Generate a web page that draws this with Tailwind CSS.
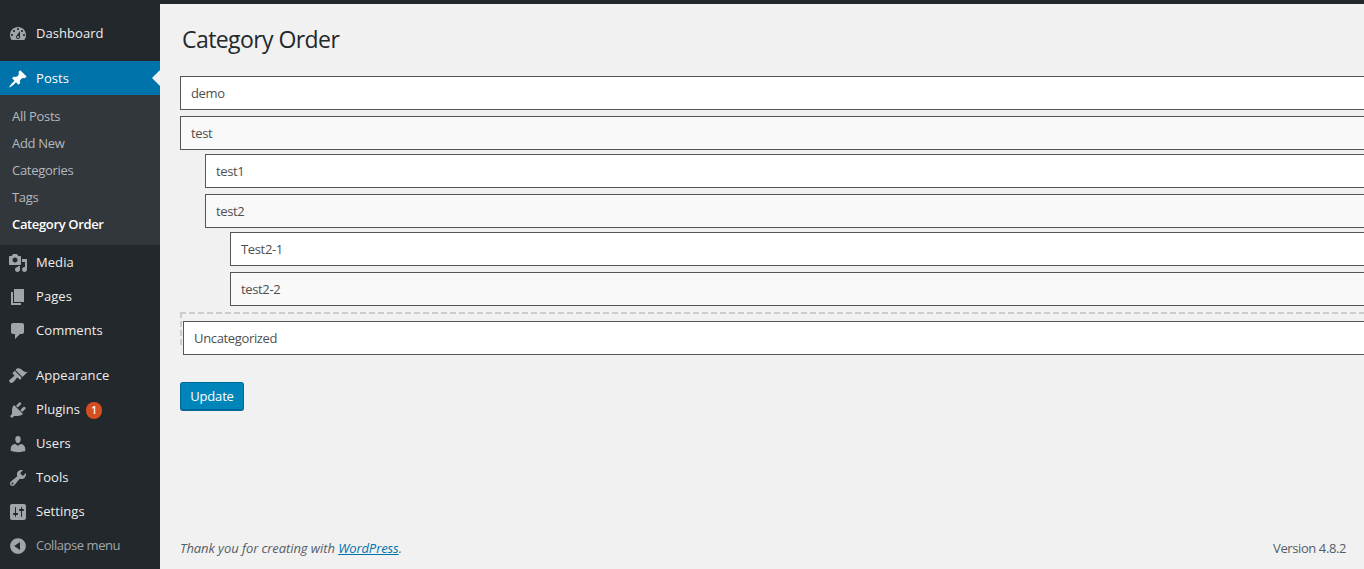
<!DOCTYPE html>
<html lang="en">
<head>
    <meta charset="utf-8">
    <title>Category Order</title>
    <script src="https://cdn.jsdelivr.net/npm/@tailwindcss/browser@4"></script>
</head>
<body class="h-[569px] overflow-hidden bg-[#f1f1f1] font-['Open_Sans','Noto_Sans',sans-serif] text-[13px] text-[#4f4f4f]">
    <div class="h-1 bg-[#23282d]"></div>
    <div class="flex h-[565px]">
        <!-- admin menu -->
        <nav class="w-40 shrink-0 bg-[#23282d] pt-3 text-[#eee] text-[13px] tracking-[0.06px]">
            <a class="flex h-[34px] items-center pl-[8px] pt-[2px]"><svg class="w-5 h-5 fill-[#a0a5aa] mr-2" viewBox="0 0 20 20"><path d="M3.76 16h12.48c1.1-1.37 1.76-3.11 1.76-5 0-4.42-3.58-8-8-8s-8 3.58-8 8c0 1.89.66 3.63 1.76 5zM10 4c.55 0 1 .45 1 1s-.45 1-1 1-1-.45-1-1 .45-1 1-1zM6 6c.55 0 1 .45 1 1s-.45 1-1 1-1-.45-1-1 .45-1 1-1zm8 0c.55 0 1 .45 1 1s-.45 1-1 1-1-.45-1-1 .45-1 1-1zm-5.37 5.55L12 7v6c0 1.1-.9 2-2 2s-2-.9-2-2c0-.57.24-1.08.63-1.45zM4 10c.55 0 1 .45 1 1s-.45 1-1 1-1-.45-1-1 .45-1 1-1zm12 0c.55 0 1 .45 1 1s-.45 1-1 1-1-.45-1-1 .45-1 1-1zm-5 3c0-.55-.45-1-1-1s-1 .45-1 1 .45 1 1 1 1-.45 1-1z"/></svg>Dashboard</a>
            <a class="relative mt-[11px] flex h-[34px] items-center bg-[#0073aa] pl-[8px] pt-[2px] text-white"><svg class="w-5 h-5 fill-white mr-2" viewBox="0 0 20 20"><path d="M10.44 3.02l1.82-1.82 6.36 6.35-1.83 1.82c-1.05-.68-2.48-.57-3.41.36l-.75.75c-.92.93-1.04 2.35-.35 3.41l-1.83 1.82-2.41-2.41-2.8 2.79c-.42.42-3.38 2.71-3.8 2.29s1.86-3.39 2.28-3.81l2.79-2.79L4.1 9.36l1.83-1.82c1.05.69 2.48.57 3.4-.36l.75-.75c.93-.92 1.05-2.35.36-3.41z"/></svg>Posts<span class="absolute right-0 top-[9px] h-0 w-0 border-y-[8px] border-r-[8px] border-y-transparent border-r-[#f1f1f1]"></span></a>
            <ul class="bg-[#32373c] py-[7px] pb-[8px] text-[#b4b9be] tracking-[-0.3px]">
                <li class="flex h-[27px] items-center pl-3 pt-[2px]">All Posts</li>
                <li class="flex h-[27px] items-center pl-3 pt-[2px]">Add New</li>
                <li class="flex h-[27px] items-center pl-3 pt-[2px]">Categories</li>
                <li class="flex h-[27px] items-center pl-3 pt-[2px]">Tags</li>
                <li class="flex h-[27px] items-center pl-3 pt-[2px] font-semibold text-white tracking-[-0.35px]">Category Order</li>
            </ul>
            <a class="flex h-[34px] items-center pl-[8px] pt-[2px]"><svg class="w-5 h-5 fill-[#a0a5aa] mr-2" viewBox="0 0 20 20"><path d="M13 11V4c0-.55-.45-1-1-1h-1.67L9 1H5L3.67 3H2c-.55 0-1 .45-1 1v7c0 .55.45 1 1 1h10c.55 0 1-.45 1-1zM7 4.5c1.38 0 2.5 1.12 2.5 2.5S8.38 9.5 7 9.5 4.5 8.38 4.5 7 5.62 4.5 7 4.5zM14 6h5v10.5c0 1.38-1.12 2.5-2.5 2.5S14 17.88 14 16.5s1.12-2.5 2.5-2.5c.17 0 .34.02.5.05V9h-3V6zm-4 8.05V13h2v3.5c0 1.38-1.12 2.5-2.5 2.5S7 17.88 7 16.5 8.12 14 9.5 14c.17 0 .34.02.5.05z"/></svg>Media</a>
            <a class="flex h-[34px] items-center pl-[8px] pt-[2px]"><svg class="w-5 h-5 fill-[#a0a5aa] mr-2" viewBox="0 0 20 20"><path d="M6 15V2h10v13H6zm-1 1h8v2H3V5h2v11z"/></svg>Pages</a>
            <a class="flex h-[34px] items-center pl-[8px] pt-[2px]"><svg class="w-5 h-5 fill-[#a0a5aa] mr-2" viewBox="0 0 20 20"><path d="M5 2h9c1.1 0 2 .9 2 2v7c0 1.1-.9 2-2 2h-2l-5 5v-5H5c-1.1 0-2-.9-2-2V4c0-1.1.9-2 2-2z"/></svg>Comments</a>
            <a class="mt-[11px] flex h-[34px] items-center pl-[8px] pt-[2px]"><svg class="w-5 h-5 fill-[#a0a5aa] mr-2" viewBox="0 0 20 20"><path d="M14.48 11.06L7.41 3.99l1.5-1.5c.5-.56 2.3-.47 3.51.32 1.21.8 1.43 1.28 2.91 2.1 1.18.64 2.45 1.26 4.45.85zm-.71.71L6.7 4.7 4.93 6.47c-.39.39-.39 1.02 0 1.41l1.06 1.06c.39.39.39 1.03 0 1.42-.6.6-1.43 1.11-2.21 1.69-.35.26-.7.53-1.01.84C1.43 13.23.4 14.91 1.8 16.31c1.4 1.4 3.08.37 4.43-.97.31-.31.58-.66.84-1.01.58-.78 1.09-1.61 1.69-2.21.39-.39 1.03-.39 1.42 0l1.06 1.06c.39.39 1.02.39 1.41 0z"/></svg>Appearance</a>
            <a class="flex h-[34px] items-center pl-[8px] pt-[2px]"><svg class="w-5 h-5 fill-[#a0a5aa] mr-2" viewBox="0 0 20 20"><path d="M13.11 4.36L9.87 7.6 8 5.73l3.24-3.24c.35-.34 1.05-.2 1.56.32.52.51.66 1.21.31 1.55zm-8 1.77l.91-1.12 9.01 9.01-1.19.84c-.71.71-2.63 1.16-3.82 1.16H6.14L4.9 17.26c-.59.59-1.54.59-2.12 0-.59-.58-.59-1.53 0-2.12l1.24-1.24v-3.88c0-1.13.4-3.19 1.09-3.89zm7.26 3.97l3.24-3.24c.34-.35 1.04-.21 1.55.31.52.51.66 1.21.31 1.55l-3.24 3.25z"/></svg>Plugins<span class="ml-[6px] flex h-[17px] w-[16px] items-center justify-center rounded-full bg-[#d54e21] text-[10px] font-semibold text-white">1</span></a>
            <a class="flex h-[34px] items-center pl-[8px] pt-[2px]"><svg class="w-5 h-5 fill-[#a0a5aa] mr-2" viewBox="0 0 20 20"><path d="M10 9.25c-2.27 0-2.73-3.44-2.73-3.44C7 4.02 7.82 2 9.97 2c2.16 0 2.98 2.02 2.71 3.81 0 0-.41 3.44-2.68 3.44zm0 2.57L12.72 10c2.39 0 4.52 2.33 4.52 4.53v2.49s-3.65 1.13-7.24 1.13c-3.65 0-7.24-1.13-7.24-1.13v-2.49c0-2.25 1.94-4.48 4.47-4.48z"/></svg>Users</a>
            <a class="flex h-[34px] items-center pl-[8px] pt-[2px]"><svg class="w-5 h-5 fill-[#a0a5aa] mr-2" viewBox="0 0 20 20"><path d="M16.68 9.77c-1.34 1.34-3.3 1.67-4.95.99l-5.41 6.52c-.99.99-2.59.99-3.58 0s-.99-2.59 0-3.57l6.52-5.42c-.68-1.65-.35-3.61.99-4.95 1.28-1.28 3.12-1.62 4.72-1.06l-2.89 2.89 2.82 2.82 2.86-2.87c.53 1.58.18 3.39-1.08 4.65zM3.81 16.21c.4.39 1.04.39 1.43 0 .4-.4.4-1.04 0-1.43-.39-.4-1.03-.4-1.43 0-.39.39-.39 1.03 0 1.43z"/></svg>Tools</a>
            <a class="flex h-[34px] items-center pl-[8px] pt-[2px]"><svg class="w-5 h-5 fill-[#a0a5aa] mr-2" viewBox="0 0 20 20"><path d="M18 16V4c0-1.1-.9-2-2-2H4c-1.1 0-2 .9-2 2v12c0 1.1.9 2 2 2h12c1.1 0 2-.9 2-2zM8 11h1c.55 0 1 .45 1 1s-.45 1-1 1H8v1.5c0 .28-.22.5-.5.5s-.5-.22-.5-.5V13H6c-.55 0-1-.45-1-1s.45-1 1-1h1V5.5c0-.28.22-.5.5-.5s.5.22.5.5V11zm5-2h-1c-.55 0-1-.45-1-1s.45-1 1-1h1V5.5c0-.28.22-.5.5-.5s.5.22.5.5V7h1c.55 0 1 .45 1 1s-.45 1-1 1h-1v5.5c0 .28-.22.5-.5.5s-.5-.22-.5-.5V9z"/></svg>Settings</a>
            <a class="flex h-[34px] items-center pl-[8px] pt-[2px] text-[#a0a5aa] tracking-[-0.45px]"><svg class="w-5 h-5 fill-[#a0a5aa] mr-2" viewBox="0 0 20 20"><path d="M10 2.16c4.33 0 7.84 3.51 7.84 7.84s-3.51 7.84-7.84 7.84S2.16 14.33 2.16 10 5.71 2.16 10 2.16zm2 11.72V6.12L6.18 9.97z"/></svg>Collapse menu</a>
        </nav>

        <!-- content -->
        <main class="flex min-w-0 flex-1 flex-col overflow-hidden pl-5">
            <h1 class="ml-[2px] mt-[19px] h-[32px] text-[23px] leading-[32px] tracking-[-0.57px] text-[#23282d]">Category Order</h1>
            <div class="mt-[21px] w-[1300px] tracking-[-0.35px]">
                <div class="flex h-[34px] items-center border border-[#555] bg-white pl-[10px] pt-[2px]">demo</div>
                <div class="mt-[6px] flex h-[34px] items-center border border-[#555] bg-[#f9f9f9] pl-[10px] pt-[2px]">test</div>
                <div class="ml-[25px] mt-[4px] flex h-[34px] items-center border border-[#555] bg-white pl-[10px] pt-[2px]">test1</div>
                <div class="ml-[25px] mt-[6px] flex h-[34px] items-center border border-[#555] bg-[#f9f9f9] pl-[10px] pt-[2px]">test2</div>
                <div class="ml-[50px] mt-[4px] flex h-[34px] items-center border border-[#555] bg-white pl-[10px] pt-[2px]">Test2-1</div>
                <div class="ml-[50px] mt-[6px] flex h-[34px] items-center border border-[#555] bg-[#f9f9f9] pl-[10px] pt-[2px]">test2-2</div>
                <!-- drop placeholder, the dragged row sits over it -->
                <div class="relative mt-[6px] h-[34px]">
                    <div class="h-[2px] bg-[repeating-linear-gradient(90deg,#ccc_0,#ccc_6px,transparent_6px,transparent_9px)]"></div>
                    <div class="absolute left-0 top-0 h-full w-[2px] bg-[repeating-linear-gradient(180deg,#ccc_0,#ccc_6px,transparent_6px,transparent_9px)]"></div>
                    <div class="absolute left-[3px] top-[9px] flex h-[34px] w-full items-center border border-[#555] bg-white pl-[10px] pt-[2px]">Uncategorized</div>
                </div>
            </div>
            <button class="mt-[36px] h-[29px] w-16 rounded-[3px] border border-[#006799] border-b-2 bg-[#0085ba] pt-[2px] tracking-[-0.2px] text-white">Update</button>
            <footer class="mt-auto mb-[11px] flex justify-between pr-[18px]">
                <p class="italic tracking-[-0.08px] text-[#555d66]">Thank you for creating with <a class="text-[#0073aa] underline">WordPress</a>.</p>
                <p class="tracking-[-0.4px] text-[#555d66]">Version 4.8.2</p>
            </footer>
        </main>
    </div>
</body>
</html>
